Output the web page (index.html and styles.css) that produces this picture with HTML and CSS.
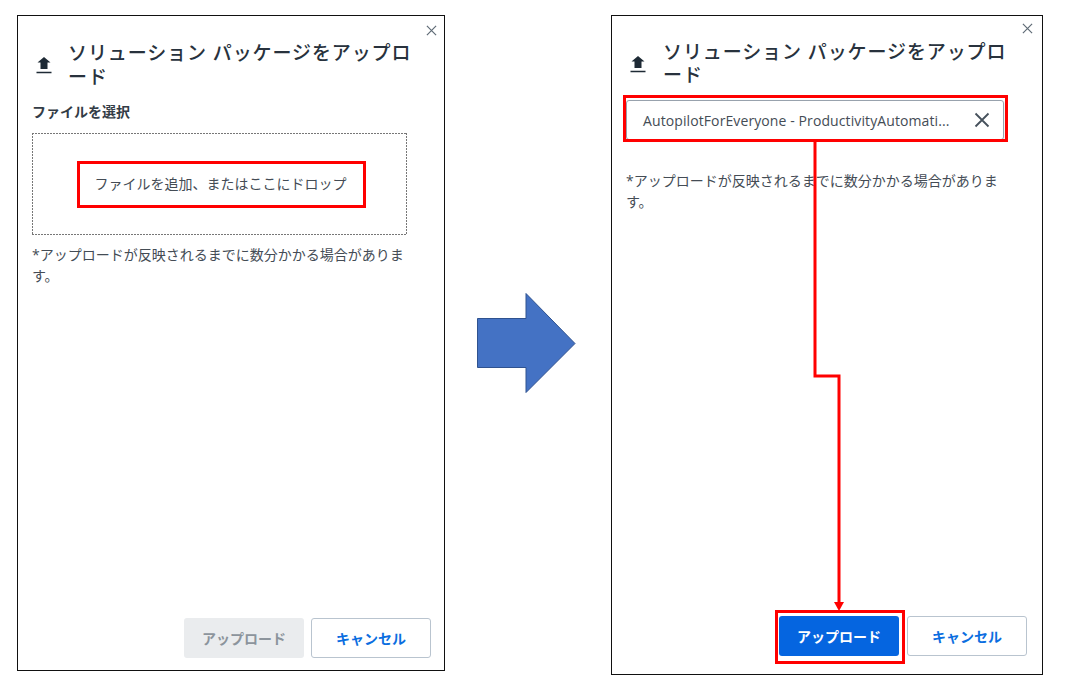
FILE: index.html
```html
<!DOCTYPE html>
<html lang="ja">
<head>
  <meta charset="UTF-8" />
  <meta name="viewport" content="width=device-width, initial-scale=1.0"/>
  <title>ソリューション パッケージをアップロード</title>
  <link rel="stylesheet" href="styles.css">
</head>
<body>

<div class="canvas">
  <!-- 左: ファイル選択前 -->
  <section class="dialog dialog-before">
    <button class="close" title="閉じる">
      <svg viewBox="0 0 12 12" width="11" height="11"><path d="M1 1l10 10M11 1L1 11"/></svg>
    </button>
    <header class="dialog-head">
      <svg class="upload-icon" viewBox="0 0 16 18" width="16" height="18"><path d="M8 1l6.500 5.600H11.500V13H4.500V6.600H1.500zM.5 15.700h15v1.500H.5z"/></svg>
      <h2>ソリューション パッケージをアップロード</h2>
    </header>
    <div class="field-title">ファイルを選択</div>
    <div class="dropzone">ファイルを追加、またはここにドロップ</div>
    <p class="note">*アップロードが反映されるまでに数分かかる場合があります。</p>
    <footer class="dialog-foot">
      <button class="btn btn-disabled">アップロード</button>
      <button class="btn btn-outline">キャンセル</button>
    </footer>
  </section>

  <!-- 右: ファイル選択後 -->
  <section class="dialog dialog-after">
    <button class="close" title="閉じる">
      <svg viewBox="0 0 12 12" width="11" height="11"><path d="M1 1l10 10M11 1L1 11"/></svg>
    </button>
    <header class="dialog-head">
      <svg class="upload-icon" viewBox="0 0 16 18" width="16" height="18"><path d="M8 1l6.500 5.600H11.500V13H4.500V6.600H1.500zM.5 15.700h15v1.500H.5z"/></svg>
      <h2>ソリューション パッケージをアップロード</h2>
    </header>
    <div class="file-chip">
      <span class="file-name">AutopilotForEveryone - ProductivityAutomati...</span>
      <svg class="file-clear" viewBox="0 0 16 16" width="16" height="16"><path d="M1.500 1.500l13 13M14.500 1.500l-13 13"/></svg>
    </div>
    <p class="note">*アップロードが反映されるまでに数分かかる場合があります。</p>
    <footer class="dialog-foot">
      <button class="btn btn-primary">アップロード</button>
      <button class="btn btn-outline">キャンセル</button>
    </footer>
  </section>

  <!-- 注釈 -->
  <div class="mark mark-drop"></div>
  <div class="mark mark-file"></div>
  <div class="mark mark-upload"></div>

  <svg class="notes" viewBox="0 0 1071 689" width="1071" height="689">
    <path class="big-arrow" d="M477.500 318.500H526V293.500L575 343.500L526 392.500V367.500H477.500z"/>
    <path class="connector" d="M815 141V376H839V604"/>
    <path class="connector-head" d="M834 602h10l-5 9z"/>
  </svg>
</div>

</body>
</html>
```

FILE: styles.css
```css
body { margin: 0; background: white; font-family: "Open Sans", "Noto Sans CJK JP", sans-serif; color: #2b3540; }
.canvas { position: relative; width: 1071px; height: 689px; overflow: hidden; }

.dialog { position: absolute; top: 15px; box-sizing: border-box; display: flex; flex-direction: column; background: white; border: 1.5px solid #111; }
.dialog-before { left: 17px; width: 428px; height: 656px; padding: 0 13px 12px 14px; }
.dialog-after { left: 611px; width: 432px; height: 660px; padding: 0 15px 18px 14px; }

.close { position: absolute; top: 9px; right: 7px; padding: 0; border: none; background: none; line-height: 0; }
.dialog-after .close { top: 7px; right: 9px; }
.close path { stroke: #5f6b76; stroke-width: 1.3; fill: none; }

.dialog-head { display: flex; align-items: center; gap: 16px; height: 50px; padding: 24px 0 0 4px; }
.dialog-after .dialog-head { height: 48px; gap: 17px; }
.dialog-head h2 { margin: 0; width: 350px; font-size: 19px; line-height: 24px; font-weight: 500; letter-spacing: 0.9px; color: #28323d; }
.dialog-after .dialog-head h2 { line-height: 23px; }
.upload-icon { flex: none; }
.upload-icon path { fill: #1e2a35; }

.field-title { margin-top: 12px; font-size: 14px; line-height: 20px; font-weight: 700; color: #333c46; }
.dropzone {
  display: flex; align-items: center; justify-content: center; box-sizing: border-box;
  height: 102px; margin-top: 11px; margin-right: 24px; padding: 0 0 2px 2px;
  font-size: 14px; color: #444c55;
  background:
    repeating-linear-gradient(90deg, #777 0 2px, transparent 2px 3px) top / 100% 1px no-repeat,
    repeating-linear-gradient(90deg, #777 0 2px, transparent 2px 3px) bottom / 100% 1px no-repeat,
    repeating-linear-gradient(180deg, #777 0 2px, transparent 2px 3px) left / 1px 100% no-repeat,
    repeating-linear-gradient(180deg, #777 0 2px, transparent 2px 3px) right / 1px 100% no-repeat;
}
.note { margin: 9px 0 0; width: 380px; font-size: 14px; line-height: 21px; color: #444c55; }

.file-chip { display: flex; align-items: center; gap: 24px; box-sizing: border-box; height: 40px; margin: 12px 23px 0 0; padding: 0 13px 0 16px; border: 1px solid #98a2ad; border-radius: 3px; box-shadow: 0 1px 2px rgba(0,0,0,0.2); }
.file-name { flex: 1; white-space: nowrap; font-size: 14px; letter-spacing: 0.1px; color: #444c55; }
.file-clear { flex: none; }
.file-clear path { stroke: #46515c; stroke-width: 1.800; fill: none; }
.dialog-after .note { margin-top: 30px; }

.dialog-foot { display: flex; justify-content: flex-end; gap: 8px; margin-top: auto; }
.dialog-before .dialog-foot { gap: 7px; }
.btn { width: 120px; height: 40px; padding: 0; border-radius: 3px; font-family: inherit; font-size: 14px; font-weight: 700; }
.btn-disabled { border: none; background: #eaecee; color: #8c949c; }
.btn-outline { border: 1px solid #b9c4cf; background: white; color: #0b6ee0; }
.btn-primary { border: none; background: #0565e0; color: white; }

.mark { position: absolute; box-sizing: border-box; border: 3px solid #f00; }
.mark-drop { left: 77px; top: 161px; width: 289px; height: 47px; }
.mark-file { left: 623px; top: 95px; width: 385px; height: 47px; }
.mark-upload { left: 775px; top: 610px; width: 130px; height: 54px; }

.notes { position: absolute; left: 0; top: 0; pointer-events: none; }
.big-arrow { fill: #4472c4; stroke: #2f528f; stroke-width: 1; }
.connector { fill: none; stroke: #f00; stroke-width: 3; }
.connector-head { fill: #f00; }
```
